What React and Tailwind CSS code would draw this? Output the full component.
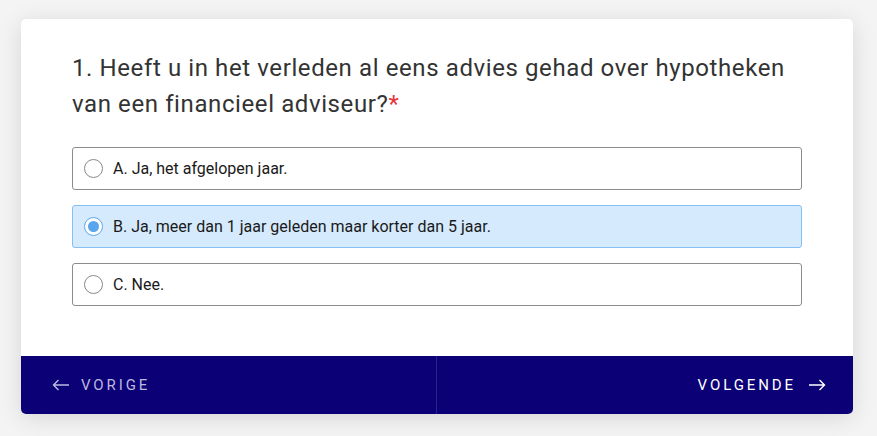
import { useState } from "react";

const options = [
    { id: "a", label: "A. Ja, het afgelopen jaar." },
    { id: "b", label: "B. Ja, meer dan 1 jaar geleden maar korter dan 5 jaar." },
    { id: "c", label: "C. Nee." },
];

function Radio({ checked }) {
    if (checked) {
        return (
            <span className="flex h-[19px] w-[19px] shrink-0 items-center justify-center rounded-full border border-[#5aa6ee] bg-white">
                <span className="h-[11px] w-[11px] rounded-full bg-[#5aa6ee]" />
            </span>
        );
    }
    return <span className="h-[19px] w-[19px] shrink-0 rounded-full border border-[#8a8a8a] bg-white" />;
}

export default function App() {
    const [selected, setSelected] = useState("b");

    return (
        <div className="min-h-[436px] w-full bg-[#f4f4f4] px-[21px] pt-[19px] font-['Roboto',sans-serif]">
            <div className="w-[832px] overflow-hidden rounded-[5px] bg-white shadow-[0_4px_24px_rgba(0,0,0,0.12)]">
                {/* вопрос */}
                <div className="px-[51px] pb-[50px] pt-[31px]">
                    <h2 className="w-[730px] text-[24px] leading-[36px] tracking-[0.6px] text-[#333333]">
                        1. Heeft u in het verleden al eens advies gehad over hypotheken van een financieel adviseur?
                        <span className="text-[#e8323c]">*</span>
                    </h2>

                    <div className="mt-[25px] flex w-[730px] flex-col gap-[15px]">
                        {options.map((o) => {
                            const checked = selected === o.id;
                            return (
                                <button
                                    key={o.id}
                                    type="button"
                                    onClick={() => setSelected(o.id)}
                                    className={
                                        checked
                                            ? "flex h-[43px] items-center gap-[10px] rounded-[3px] border border-[#86bff3] bg-[#d6eafd] px-[11px] text-left text-[16px] text-[#1a1a1a]"
                                            : "flex h-[43px] items-center gap-[10px] rounded-[3px] border border-[#8c8c8c] bg-white px-[11px] text-left text-[16px] text-[#1a1a1a]"
                                    }
                                >
                                    <Radio checked={checked} />
                                    <span>{o.label}</span>
                                </button>
                            );
                        })}
                    </div>
                </div>

                {/* навигация */}
                <div className="grid h-[58px] grid-cols-2 bg-[#0b0076]">
                    <button
                        type="button"
                        className="flex items-center gap-[11px] border-r border-[#2a2388] pl-[31px] text-[15px] font-normal tracking-[2.9px] text-[#bcb9de]"
                    >
                        <svg width="18" height="12" viewBox="0 0 18 12" fill="none" stroke="currentColor" strokeWidth="1.4">
                            <path d="M17 6H1.5M6.5 1L1.5 6l5 5" />
                        </svg>
                        VORIGE
                    </button>
                    <button
                        type="button"
                        className="flex items-center justify-end gap-[12px] pr-[27px] text-[15px] font-normal tracking-[2.9px] text-white"
                    >
                        VOLGENDE
                        <svg width="18" height="12" viewBox="0 0 18 12" fill="none" stroke="currentColor" strokeWidth="1.4">
                            <path d="M1 6h15.5M11.5 1l5 5-5 5" />
                        </svg>
                    </button>
                </div>
            </div>
        </div>
    );
}
